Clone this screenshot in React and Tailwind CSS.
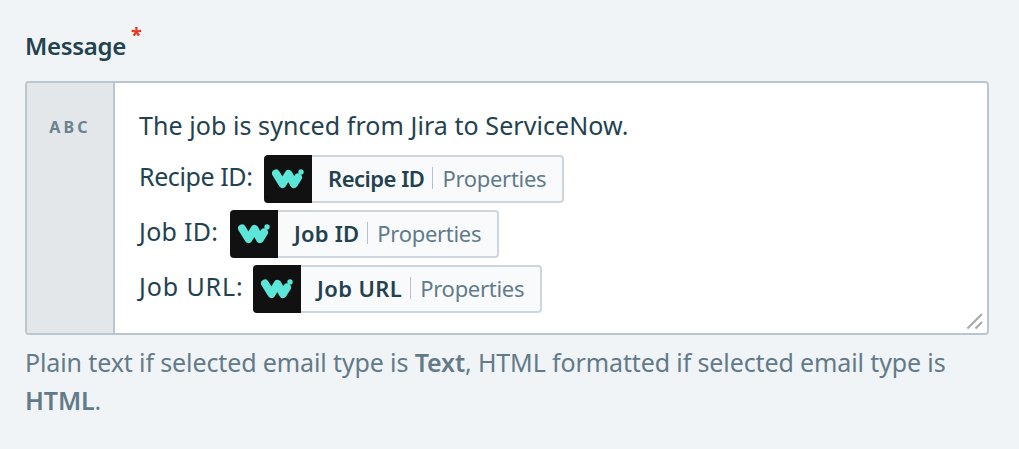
const FONT = "font-['Noto_Sans',sans-serif]";

function Logo() {
  return (
    <svg width="32" height="20" viewBox="0 0 32 20" fill="none">
      <path d="M4 4.5 L10.5 15 L16.5 5 L22 15 L26 8.5" stroke="#5ce6d8" strokeWidth="8" strokeLinecap="round" strokeLinejoin="round" />
      <circle cx="29" cy="3" r="2.7" fill="#5ce6d8" />
    </svg>
  );
}

function Pill({ name, track }) {
  return (
    <span className="inline-flex h-[48px] items-stretch align-middle">
      <span className="flex w-[48px] items-center justify-center rounded-l-[4px] bg-[#111111]">
        <Logo />
      </span>
      <span className="flex items-center rounded-r-[4px] border-2 border-l-0 border-[#cdd6dd] bg-[#f8fafc] pb-[2px] pl-[16px] pr-[16px] text-[22px] tracking-[-0.3px]">
        <span className={`font-semibold text-[#23424f] ${track}`}>{name}</span>
        <span className="ml-[8px] mr-[9px] h-[22px] w-[1px] bg-[#b5c2cb]" />
        <span className="text-[#627a89]">Properties</span>
      </span>
    </span>
  );
}

function Row({ label, name, width, track, labelTrack }) {
  return (
    <div className="flex h-[48px] items-center">
      <span className={`pb-[4px] ${width} ${labelTrack}`}>{label}</span>
      <Pill name={name} track={track} />
    </div>
  );
}

export default function App() {
  return (
    <div className={`h-[449px] w-[1019px] overflow-hidden bg-[#f1f4f6] pl-[25px] pr-[30px] pt-[28px] ${FONT}`}>
      <label className="flex h-[36px] items-start text-[24px] font-semibold leading-[36px] tracking-[-0.3px] text-[#23424f]">
        Message
        <span className="ml-[5px] text-[20px] font-bold leading-[14px] text-[#e6381e]">*</span>
      </label>

      <div className="relative mt-[17px] flex h-[254px] overflow-hidden rounded-[4px] border-2 border-[#b9c5cf] bg-white">
        <div className="flex w-[88px] shrink-0 justify-center border-r-2 border-[#b9c5cf] bg-[#e4e7ea] pt-[32px]">
          <span className="text-[16px] font-bold leading-[24px] tracking-[3.2px] text-[#6b8291]">ABC</span>
        </div>
        <div className="flex flex-1 flex-col gap-[7px] pl-[24px] pt-[26px] text-[25px] text-[#23424f]">
          <div className="mb-[-1px] h-[40px] leading-[32px] tracking-[0.07px]">The job is synced from Jira to ServiceNow.</div>
          <Row label="Recipe ID:" name="Recipe ID" width="w-[125px]" track="tracking-[-0.5px]" labelTrack="tracking-[-0.4px]" />
          <Row label="Job ID:" name="Job ID" width="w-[91px]" track="tracking-[0.2px]" labelTrack="tracking-[0.3px]" />
          <Row label="Job URL:" name="Job URL" width="w-[114px]" track="tracking-[0.4px]" labelTrack="tracking-[0.9px]" />
        </div>
        <svg className="absolute bottom-[3px] right-[3px]" width="18" height="18" viewBox="0 0 18 18">
          <path d="M1.5 16.5 L16 2 M9.5 16.5 L16 10" stroke="#a8a8a8" strokeWidth="2" />
        </svg>
      </div>

      <p className="mt-[8px] text-[25px] leading-[38px] tracking-[-0.12px] text-[#627a89]">
        Plain text if selected email type is <strong className="font-semibold">Text</strong>, HTML formatted if selected email type is <strong className="font-semibold">HTML</strong>.
      </p>
    </div>
  );
}
